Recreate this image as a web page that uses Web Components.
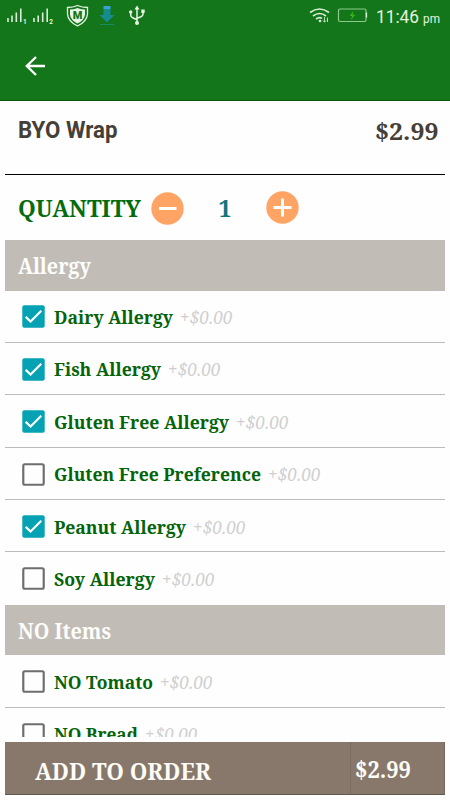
<!DOCTYPE html>
<html lang="en">
<head>
<meta charset="utf-8">
<title>BYO Wrap</title>
<style>
  body {
    margin: 0;
    background: #fefefe;
    font-family: "Noto Serif", "Droid Serif", "DejaVu Serif Condensed", "DejaVu Serif", serif;
  }
</style>
</head>
<body>
<order-screen>
  <status-bar slot="top"></status-bar>
  <app-bar slot="top"></app-bar>
  <item-summary slot="top" name="BYO Wrap" price="$2.99"></item-summary>
  <quantity-picker slot="top" value="1"></quantity-picker>

  <option-group label="Allergy" text-width="73">
    <option-row label="Dairy Allergy" text-width="119" checked></option-row>
    <option-row label="Fish Allergy" text-width="107" checked></option-row>
    <option-row label="Gluten Free Allergy" text-width="175" checked></option-row>
    <option-row label="Gluten Free Preference" text-width="207"></option-row>
    <option-row label="Peanut Allergy" text-width="132" checked></option-row>
    <option-row label="Soy Allergy" text-width="101"></option-row>
  </option-group>
  <option-group label="NO Items" text-width="93">
    <option-row label="NO Tomato" text-width="99"></option-row>
    <option-row label="NO Bread" text-width="84"></option-row>
  </option-group>

  <order-button slot="bottom" price="$2.99">ADD TO ORDER</order-button>
</order-screen>

<script>
/**
 * Single line of text, stretched or squeezed to a given width.
 */
class FitText extends HTMLElement {
  constructor() {
    super();
    this.attachShadow({ mode: 'open' });
    this.shadowRoot.innerHTML = `
      <style>
        :host { display: block; flex: none; white-space: nowrap; }
        span { display: inline-block; transform-origin: 0 50%; }
      </style>
      <span><slot></slot></span>
    `;
  }

  connectedCallback() {
    const width = parseFloat(this.getAttribute('width'));
    const span = this.shadowRoot.querySelector('span');
    const natural = span.getBoundingClientRect().width;
    if (!width || !natural) return;
    this.style.width = `${width}px`;
    span.style.transform = `scaleX(${width / natural})`;
  }
}

/**
 * Page frame: fixed top, clipped option list, bottom button
 */
class OrderScreen extends HTMLElement {
  constructor() {
    super();
    this.attachShadow({ mode: 'open' });
    this.shadowRoot.innerHTML = `
      <style>
        :host {
          display: flex;
          flex-direction: column;
          width: 450px;
          height: 800px;
          overflow: hidden;
        }
        main { height: 497px; flex: none; overflow: hidden; margin: 0 5px; }
        footer { margin: 5px 5px 0; }
      </style>
      <slot name="top"></slot>
      <main><slot></slot></main>
      <footer><slot name="bottom"></slot></footer>
    `;
  }
}

class StatusBar extends HTMLElement {
  constructor() {
    super();
    this.attachShadow({ mode: 'open' });
    this.shadowRoot.innerHTML = `
      <style>
        :host {
          display: flex;
          align-items: center;
          justify-content: space-between;
          height: 32px;
          flex: none;
          background: #13761a;
          color: #e2f3df;
          font-family: Roboto, sans-serif;
        }
        svg { display: block; flex: none; }
        .sim { font: bold 6.500px Roboto, sans-serif; fill: #e2f3df; }
        .badge { font: 900 11px Roboto, sans-serif; fill: #13761a; }
        .right { display: flex; align-items: center; padding-right: 10px; }
        .time { display: flex; align-items: baseline; gap: 4px; margin-left: 8px; padding-top: 1px; }
        .clock { font-size: 18.5px; }
        .ampm { font-size: 13.5px; }
      </style>
      <svg width="156" height="32" viewBox="0 0 156 32" fill="none">
        <g stroke="#d9eed6" stroke-width="1.6">
          <path d="M8 22v-4M12 22v-6.500M16.300 22v-9.500M20.800 22v-13.500"/>
          <path d="M34 22v-4M38.200 22v-6.500M42.700 22v-9.500M47.200 22v-13.500"/>
        </g>
        <text class="sim" x="23" y="23.500">1</text>
        <text class="sim" x="49.300" y="23.500">2</text>
        <path d="M67.500 7.500Q73 7.500 77.500 5.500Q82 7.500 87.500 7.500V14Q87 21.500 77.500 26Q68 21.500 67.500 14Z" stroke="#e8f5e4" stroke-width="1.3"/>
        <path d="M70 9.500Q74 9.500 77.500 8Q81 9.500 85 9.500V14.500Q84.500 20 77.500 23.500Q70.500 20 70 14.500Z" fill="#e8f5e4"/>
        <text class="badge" x="77.500" y="18.500" text-anchor="middle">M</text>
        <path d="M103.500 6h7v3h-7z" fill="#3aa0dc"/>
        <path d="M103.500 9h7v6h4l-7.500 7.500-7.500-7.500h4z" fill="#168c8e"/>
        <path d="M100 24.500h14" stroke="#168c62" stroke-width="1"/>
        <g stroke="#e8f5e4" stroke-width="1.5">
          <path d="M137 8v15M130.700 12v3q0 2 2 2.700l4.300 2M143 12v2q0 2-2 2.700l-4 1.500"/>
        </g>
        <g fill="#e8f5e4">
          <path d="M137 5.500l2.500 4h-5z"/>
          <circle cx="137" cy="23" r="2"/>
          <circle cx="130.700" cy="12" r="1.700"/>
          <path d="M141.300 9.500h3.400v3.400h-3.400z"/>
        </g>
      </svg>
      <div class="right">
        <svg width="60" height="32" viewBox="308 0 60 32" fill="none">
          <g stroke="#d9eed6" stroke-width="1.600">
            <path d="M310 12.500Q319.500 5.500 329 12.500"/>
            <path d="M313 16Q319.500 11 326 16"/>
            <path d="M316 19Q319.500 16.500 322 18.500"/>
          </g>
          <circle cx="320" cy="21" r="1.300" fill="#d9eed6"/>
          <path d="M324.500 17v5M323 20.500l1.500 1.700 1.500-1.700M327.500 22v-4.500" stroke="#b8dcb6" stroke-width="1"/>
          <rect x="338.500" y="9" width="27.500" height="12.500" rx="1.500" stroke="#8ec98b" stroke-width="1.200"/>
          <path d="M366.500 12.500v5" stroke="#d9eed6" stroke-width="1.300"/>
          <path d="M353.500 11l-4 5h2.700l-1.500 4 4.800-5.300h-2.800z" fill="#35b51b"/>
        </svg>
        <div class="time">
          <fit-text class="clock" width="43">11:46</fit-text>
          <fit-text class="ampm" width="17">pm</fit-text>
        </div>
      </div>
    `;
  }
}

class AppBar extends HTMLElement {
  constructor() {
    super();
    this.attachShadow({ mode: 'open' });
    this.shadowRoot.innerHTML = `
      <style>
        :host {
          display: flex;
          align-items: center;
          box-sizing: border-box;
          height: 69px;
          flex: none;
          padding: 0 0 0 24px;
          background: #13761a;
          border-bottom: 1px solid #0b5a10;
        }
      </style>
      <svg width="22" height="22" viewBox="0 0 22 22" fill="none" stroke="#fff" stroke-width="2.4" role="img" aria-label="Back">
        <path d="M21 11H3M12 2l-9.200 9 9.200 9"/>
      </svg>
    `;
  }
}

class ItemSummary extends HTMLElement {
  constructor() {
    super();
    this.attachShadow({ mode: 'open' });
    this.shadowRoot.innerHTML = `
      <style>
        :host {
          display: flex;
          justify-content: space-between;
          box-sizing: border-box;
          height: 74px;
          flex: none;
          margin: 0 5px;
          padding: 15px 7px 0 12.500px;
          border-bottom: 1px solid #000;
          color: #453f38;
          font-weight: bold;
          line-height: 30px;
        }
        .name { font: bold 23px/30px Roboto, sans-serif; }
        .price { font-size: 24px; line-height: 30px; }
      </style>
      <fit-text class="name" width="99.500">${this.getAttribute('name')}</fit-text>
      <fit-text class="price" width="63.500">${this.getAttribute('price')}</fit-text>
    `;
  }
}

class QuantityPicker extends HTMLElement {
  constructor() {
    super();
    this.attachShadow({ mode: 'open' });
    this.shadowRoot.innerHTML = `
      <style>
        :host {
          display: flex;
          align-items: center;
          box-sizing: border-box;
          height: 65px;
          flex: none;
          padding: 0 0 0 17.500px;
          color: #046c0a;
          font-weight: bold;
          font-size: 23px;
        }
        button { display: block; padding: 0; border: 0; background: none; width: 33px; height: 33px; }
        svg { display: block; }
        .minus { margin: 1px 34.500px 0 10.500px; }
        .plus { margin: -1px 0 0 34.500px; }
        .value { color: #10757f; }
      </style>
      <fit-text width="123">QUANTITY</fit-text>
      <button class="minus" aria-label="Less">
        <svg width="33" height="33" viewBox="0 0 33 33">
          <circle cx="16.500" cy="16.500" r="16.200" fill="#ffa465"/>
          <path d="M8 16.500h17.500" stroke="#fff" stroke-width="3"/>
        </svg>
      </button>
      <fit-text class="value" width="13">${this.getAttribute('value')}</fit-text>
      <button class="plus" aria-label="More">
        <svg width="33" height="33" viewBox="0 0 33 33">
          <circle cx="16.500" cy="16.500" r="16.200" fill="#ffa465"/>
          <path d="M7.500 16.500h18M16.500 7.500v18" stroke="#fff" stroke-width="3"/>
        </svg>
      </button>
    `;
  }
}

/**
 * Section heading with its option rows
 */
class OptionGroup extends HTMLElement {
  constructor() {
    super();
    this.attachShadow({ mode: 'open' });
    this.shadowRoot.innerHTML = `
      <style>
        :host { display: block; }
        h2 {
          display: flex;
          align-items: center;
          box-sizing: border-box;
          height: 50.500px;
          margin: 0;
          padding: 2px 0 0 12.500px;
          background: #c1bcb5;
          color: #fdfdfb;
          font-size: 21px;
        }
        ::slotted(option-row:last-child) { --divider: transparent; }
      </style>
      <h2><fit-text width="${this.getAttribute('text-width')}">${this.getAttribute('label')}</fit-text></h2>
      <slot></slot>
    `;
  }
}

class OptionRow extends HTMLElement {
  constructor() {
    super();
    this.attachShadow({ mode: 'open' });
    this.shadowRoot.innerHTML = `
      <style>
        :host {
          display: flex;
          align-items: center;
          box-sizing: border-box;
          height: 52.400px;
          padding: 1.500px 0 0 17px;
          border-bottom: 1px solid var(--divider, #bdbbb9);
        }
        svg { display: block; flex: none; }
        .label { margin-left: 8.500px; color: #046409; font-weight: bold; font-size: 18px; }
        .extra { margin-left: 7px; color: #cfcfcf; font-style: italic; font-size: 18px; }
      </style>
      ${this.getBox()}
      <fit-text class="label" width="${this.getAttribute('text-width')}">${this.getAttribute('label')}</fit-text>
      <fit-text class="extra" width="52.500">+$0.00</fit-text>
    `;
  }

  getBox() {
    const shape = this.hasAttribute('checked')
      ? `<rect x="0.300" y="0.300" width="22.700" height="22.700" rx="2" fill="#05a2b4"/>
         <path d="M3.700 12l5 4.800L19.500 5.800" fill="none" stroke="#fff" stroke-width="2.200"/>`
      : '<rect x="1.300" y="1.300" width="20.700" height="20.700" rx="1.500" fill="none" stroke="#6e6e6e" stroke-width="2.200"/>';
    return `<svg width="23" height="23" viewBox="0 0 23.300 23.300">${shape}</svg>`;
  }
}

class OrderButton extends HTMLElement {
  constructor() {
    super();
    this.attachShadow({ mode: 'open' });
    this.shadowRoot.innerHTML = `
      <style>
        :host {
          display: flex;
          box-sizing: border-box;
          height: 53px;
          background: #87786b;
          border-bottom: 1px solid #62584e;
          border-right: 1px solid #74685c;
          color: #fdfcf7;
          font-weight: bold;
          font-size: 23px;
        }
        div { display: flex; align-items: center; }
        .action { width: 345.500px; padding: 5px 0 0 30px; box-sizing: border-box; border-right: 1px solid #7a6c60; }
        .price { padding: 1px 0 0 4.500px; }
      </style>
      <div class="action"><fit-text width="176"><slot></slot></fit-text></div>
      <div class="price"><fit-text width="56">${this.getAttribute('price')}</fit-text></div>
    `;
  }
}

customElements.define('order-screen', OrderScreen);
customElements.define('status-bar', StatusBar);
customElements.define('app-bar', AppBar);
customElements.define('item-summary', ItemSummary);
customElements.define('quantity-picker', QuantityPicker);
customElements.define('option-group', OptionGroup);
customElements.define('option-row', OptionRow);
customElements.define('order-button', OrderButton);
// Last, so that every text is already in its place when it is measured
customElements.define('fit-text', FitText);
</script>
</body>
</html>
